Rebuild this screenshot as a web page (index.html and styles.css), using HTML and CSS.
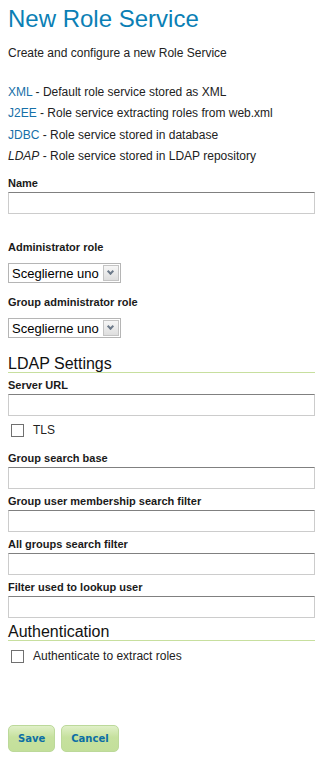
FILE: index.html
```html
<!DOCTYPE html>
<html>
<head>
    <link rel="stylesheet" href="styles.css">
</head>
<body>
    <div id="page">
        <h1>New Role Service</h1>
        <p class="intro">Create and configure a new Role Service</p>

        <ul class="tipos">
            <li><a href="#">XML</a> - Default role service stored as XML</li>
            <li><a href="#">J2EE</a> - Role service extracting roles from web.xml</li>
            <li><a href="#">JDBC</a> - Role service stored in database</li>
            <li><em>LDAP</em> - Role service stored in LDAP repository</li>
        </ul>

        <div class="campo primero">
            <label>Name</label>
            <input type="text" class="texto">
        </div>

        <div class="campo separado">
            <label>Administrator role</label>
            <div class="selector"><span>Sceglierne uno</span><i class="flecha"></i></div>
        </div>
        <div class="campo trasSelector">
            <label>Group administrator role</label>
            <div class="selector"><span>Sceglierne uno</span><i class="flecha"></i></div>
        </div>

        <h2 class="ldap">LDAP Settings</h2>
        <div class="campo">
            <label>Server URL</label>
            <input type="text" class="texto">
        </div>
        <div class="check"><span class="caja"></span>TLS</div>
        <div class="campo">
            <label>Group search base</label>
            <input type="text" class="texto">
        </div>
        <div class="campo">
            <label>Group user membership search filter</label>
            <input type="text" class="texto">
        </div>
        <div class="campo">
            <label>All groups search filter</label>
            <input type="text" class="texto">
        </div>
        <div class="campo">
            <label>Filter used to lookup user</label>
            <input type="text" class="texto">
        </div>

        <h2 class="auth">Authentication</h2>
        <div class="check"><span class="caja"></span>Authenticate to extract roles</div>

        <div class="botones">
            <button class="boton">Save</button>
            <button class="boton">Cancel</button>
        </div>
    </div>
</body>
</html>
```

FILE: styles.css
```css
body{
    margin: 0;
    background-color: #fff;
    font-family: "Liberation Sans", Arial, sans-serif;
    font-size: 12px;
    color: #222;
}
#page{
    padding: 4px 17px 0 8px;
}
h1{
    margin: 0;
    font-size: 24px;
    font-weight: normal;
    line-height: 30px;
    color: #0b7fb5;
}
.intro{
    margin: 11px 0 0 0;
    line-height: 16px;
}
.tipos{
    list-style: none;
    margin: 21px 0 0 0;
    padding: 0;
}
.tipos li{
    line-height: 21.3px;
}
.tipos a{
    color: #1670a8;
    text-decoration: none;
}
.campo{
    display: flex;
    flex-direction: column;
    margin-top: 6px;
}
.campo label{
    font-weight: bold;
    font-size: 11px;
    line-height: 12px;
    margin-bottom: 3px;
    color: #1a1a1a;
}
.primero{
    margin-top: 10px;
}
.separado{
    margin-top: 27px;
}
.trasSelector{
    margin-top: 13px;
}
.texto{
    box-sizing: border-box;
    width: 307px;
    height: 22px;
    margin: 0;
    border: 1px solid #cccccc;
    border-top-color: #808080;
    padding: 2px 4px;
}
.selector{
    box-sizing: border-box;
    display: flex;
    align-items: center;
    width: 113px;
    height: 20px;
    border: 1px solid #b5b5b5;
    font-size: 13px;
    color: #000;
    margin-top: 7px;
}
.selector span{
    flex: 1;
    padding-left: 3px;
}
.flecha{
    box-sizing: border-box;
    width: 16px;
    height: 16px;
    margin-right: 1px;
    border: 1px solid #c4c4c4;
    background: linear-gradient(#f6f6f6, #dedede);
    position: relative;
}
.flecha::after{
    content: "";
    position: absolute;
    left: 4px;
    top: 3px;
    width: 3px;
    height: 3px;
    border-right: 2px solid #6d7a8a;
    border-bottom: 2px solid #6d7a8a;
    transform: rotate(45deg);
}
h2{
    margin: 0;
    font-size: 16px;
    font-weight: normal;
    color: #111;
    line-height: 17px;
    border-bottom: 1px solid #c7df9e;
    width: 307px;
}
.ldap{
    margin-top: 17px;
}
.auth{
    margin-top: 5px;
}
.check{
    display: flex;
    align-items: center;
    margin: 7px 0 15px 0;
    padding-left: 3px;
    line-height: 14px;
}
.auth + .check{
    margin-top: 8px;
}
.caja{
    box-sizing: border-box;
    width: 13px;
    height: 13px;
    border: 1px solid #707070;
    margin-right: 9px;
    background-color: #fff;
}
.botones{
    display: flex;
    gap: 6px;
    margin-top: 62px;
}
.boton{
    height: 27px;
    padding: 0 9px;
    border: 1px solid #bcd99a;
    border-radius: 5px;
    background: linear-gradient(#e0f0c8, #c6e19e 45%, #c3df9a);
    color: #0c6ea5;
    font-family: "DejaVu Sans", Verdana, sans-serif;
    font-weight: bold;
    font-size: 10px;
}
```
